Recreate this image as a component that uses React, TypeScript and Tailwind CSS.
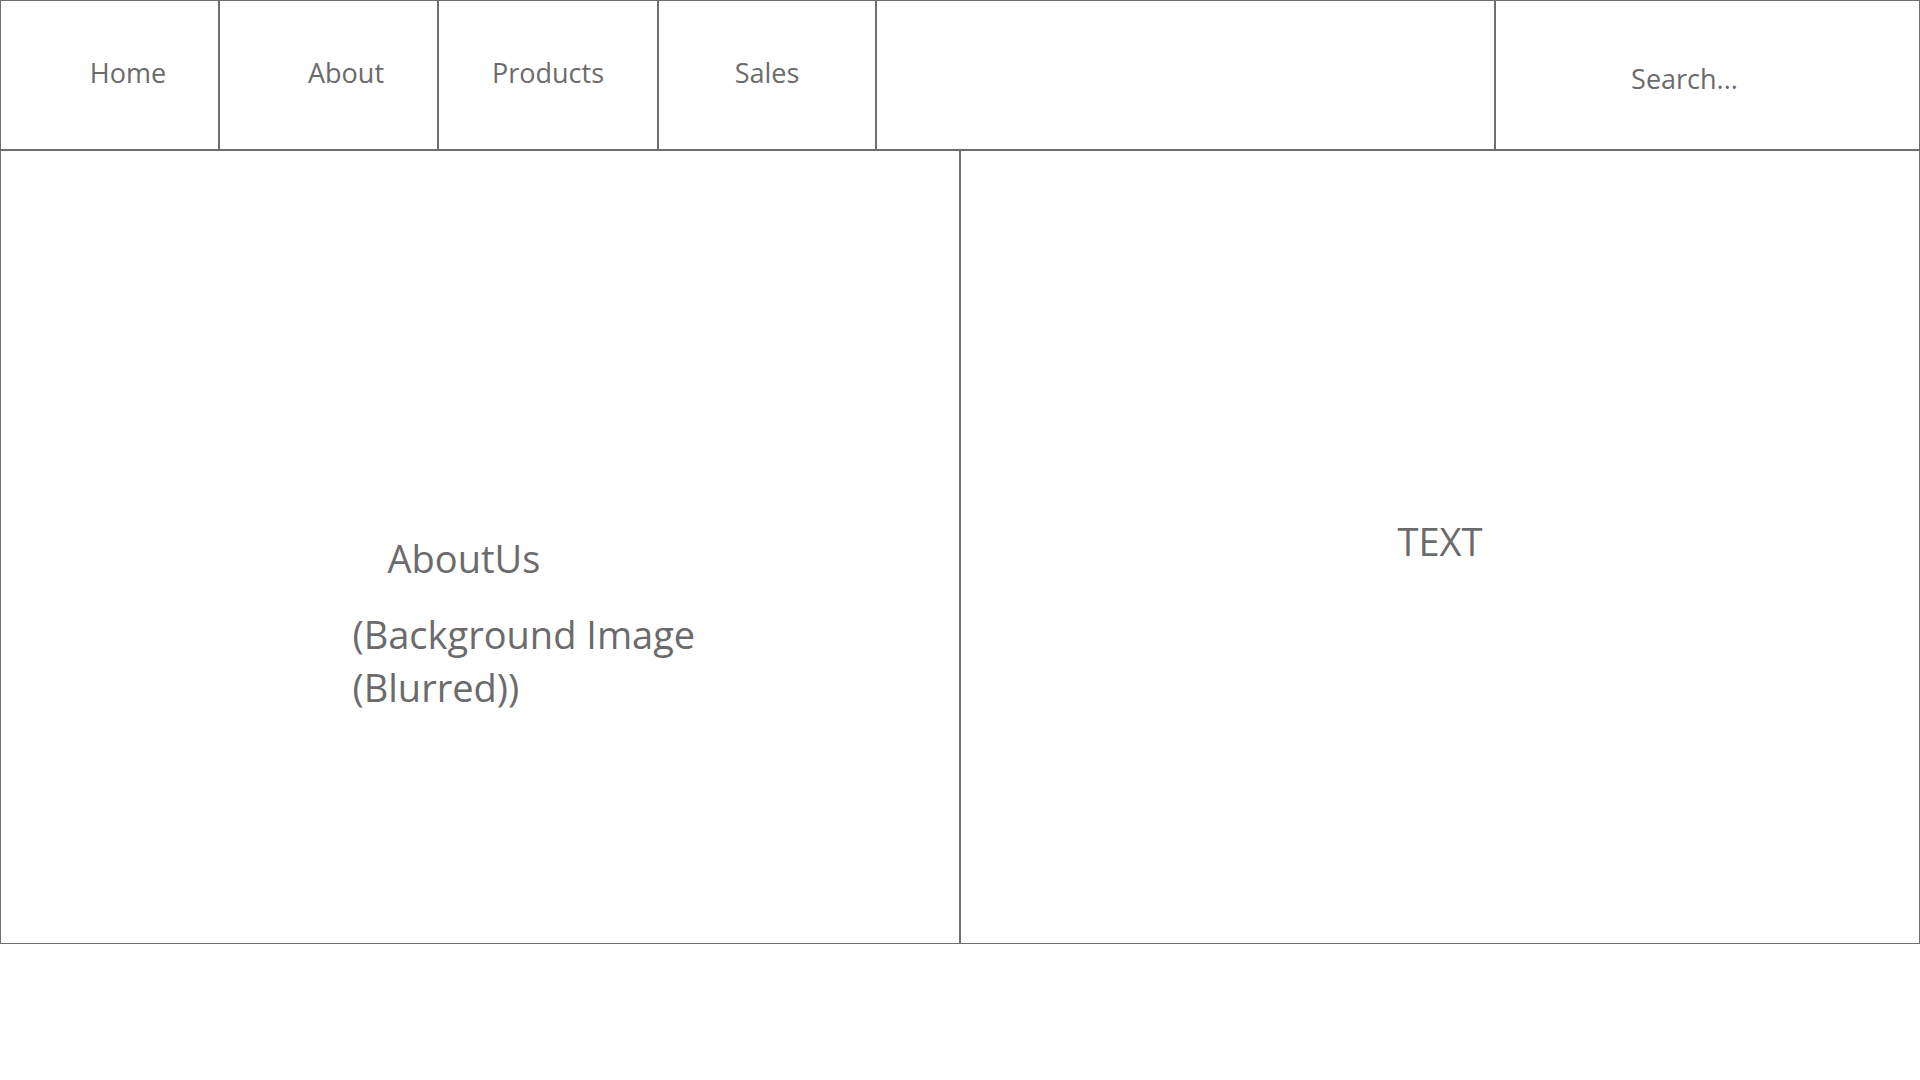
const navItems = [
  { label: 'Home', w: 'w-[219px]', shift: 'ml-[37px]' },
  { label: 'About', w: 'w-[219px]', shift: 'ml-[35px]' },
  { label: 'Products', w: 'w-[220px]', shift: '' },
  { label: 'Sales', w: 'w-[218px]', shift: '' },
];

export default function App() {
  return (
    <div className="w-[1920px] h-[1080px] bg-white font-['Open_Sans',sans-serif] text-[#6b6b6b]">
      <div className="w-[1920px] h-[944px] border border-[#6e6e6e] flex flex-col">
        {/* Nav bar */}
        <div className="h-[150px] flex border-b-2 border-[#6e6e6e] shrink-0">
          {navItems.map((item) => (
            <div
              key={item.label}
              className={`${item.w} shrink-0 border-r-2 border-[#6e6e6e] flex items-center justify-center pb-[5px]`}
            >
              <span className={`${item.shift} text-[27px] leading-none`}>{item.label}</span>
            </div>
          ))}
          <div className="flex-1 border-r-2 border-[#6e6e6e]" />
          <div className="w-[423px] shrink-0 flex items-center justify-center pt-[6px]">
            <span className="mr-[46px] text-[27px] leading-none">Search...</span>
          </div>
        </div>

        {/* Content */}
        <div className="flex-1 flex">
          <div className="w-[960px] shrink-0 border-r-2 border-[#6e6e6e] flex flex-col items-center justify-center pt-[152px]">
            <div className="w-[350px] ml-[95px]">
              <div className="ml-[35px] text-[38px] leading-[50px]">AboutUs</div>
              <div className="mt-[25px] text-[38px] leading-[53px]">
                (Background Image
                <br />
                (Blurred))
              </div>
            </div>
          </div>
          <div className="flex-1 flex items-center justify-center pb-[12px]">
            <span className="text-[38px] leading-none">TEXT</span>
          </div>
        </div>
      </div>
    </div>
  );
}
